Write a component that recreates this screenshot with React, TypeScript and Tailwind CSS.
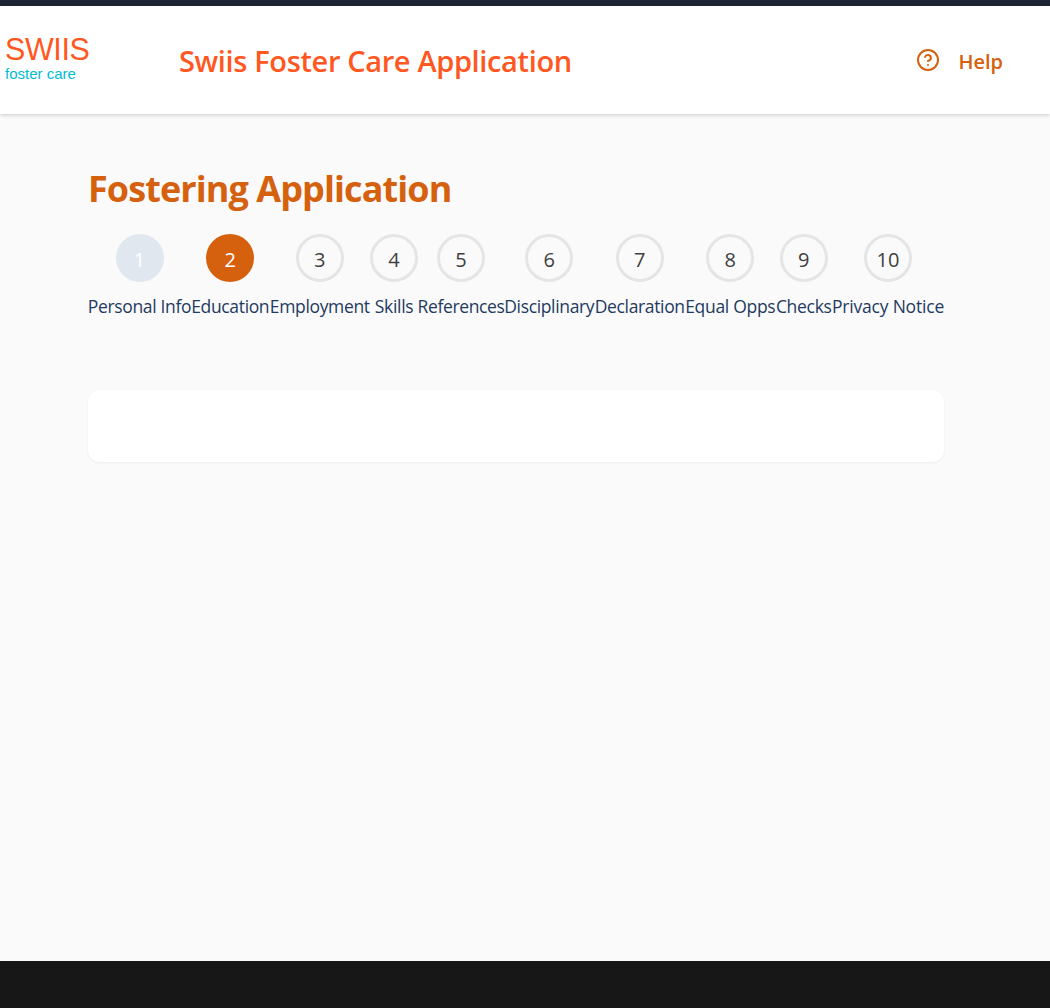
import React from "react";
import { CircleHelp } from "lucide-react";

type Step = { label: string; width: string; tracking: string };

const steps: Step[] = [
  { label: "Personal Info", width: "w-[103px]", tracking: "tracking-[-0.35px]" },
  { label: "Education", width: "w-[78.5px]", tracking: "tracking-[-0.35px]" },
  { label: "Employment", width: "w-[100.5px]", tracking: "tracking-[-0.35px]" },
  { label: "Skills", width: "w-[48px]", tracking: "tracking-[-0.3px]" },
  { label: "References", width: "w-[86px]", tracking: "tracking-[-0.37px]" },
  { label: "Disciplinary", width: "w-[90.5px]", tracking: "tracking-[-0.35px]" },
  { label: "Declaration", width: "w-[90.5px]", tracking: "tracking-[-0.35px]" },
  { label: "Equal Opps", width: "w-[90.5px]", tracking: "tracking-[-0.3px]" },
  { label: "Checks", width: "w-[56.5px]", tracking: "tracking-[-0.3px]" },
  { label: "Privacy Notice", width: "w-[112px]", tracking: "tracking-[-0.2px]" },
];

function circleStyle(index: number) {
  if (index === 0) return "bg-[#e0e7ef] text-white";
  if (index === 1) return "bg-[#d5610f] text-white";
  return "border-3 border-[#e5e5e5] text-[#404040]";
}

function Header() {
  return (
    <header className="relative flex h-[108px] items-center bg-white pl-[5px] pr-[47px] shadow-[0_1px_4px_rgba(0,0,0,0.2)]">
      <div className="w-[174px] pb-[5px] font-['Liberation_Sans',sans-serif]">
        <div className="text-[30.5px] leading-[31px] tracking-[-0.4px] text-[#ff5722]">SWIIS</div>
        <div className="text-[15px] leading-[17px] text-[#00bcd4]">foster care</div>
      </div>
      <h1 className="whitespace-nowrap pt-[2px] text-[29px] font-semibold leading-9 tracking-[-0.36px] text-[#ff5722]">
        Swiis Foster Care Application
      </h1>
      <a className="ml-auto flex items-center gap-[18px] text-[#d5610f]">
        <CircleHelp size={24} strokeWidth={2} />
        <span className="pt-[3px] text-[20px] font-semibold leading-7">Help</span>
      </a>
    </header>
  );
}

export default function App() {
  return (
    <div className="flex h-[1008px] flex-col overflow-hidden bg-[#fafafa] font-['Open_Sans','Noto_Sans',sans-serif]">
      <div className="h-[6px] shrink-0 bg-[#1d2433]" />
      <Header />
      <main className="flex-1 px-[88px] pt-[50px]">
        <h2 className="h-[70px] whitespace-nowrap text-[36px] font-bold leading-[50px] tracking-[-0.92px] text-[#d5610f]">
          Fostering Application
        </h2>
        <ol className="flex">
          {steps.map((step, i) => (
            <li key={step.label} className={`flex shrink-0 flex-col items-center ${step.width}`}>
              <div className={`flex size-12 items-center justify-center rounded-full pt-[3px] text-[20px] ${circleStyle(i)}`}>
                {i + 1}
              </div>
              <span className={`mt-[11px] whitespace-nowrap text-[17.5px] leading-[27px] text-[#1e3a5f] ${step.tracking}`}>
                {step.label}
              </span>
            </li>
          ))}
        </ol>
        <section className="mt-[70px] h-[72px] w-[856px] rounded-xl bg-white shadow-[0_1px_3px_rgba(0,0,0,0.05)]" />
      </main>
      <footer className="h-[47px] shrink-0 bg-[#171717]" />
    </div>
  );
}
